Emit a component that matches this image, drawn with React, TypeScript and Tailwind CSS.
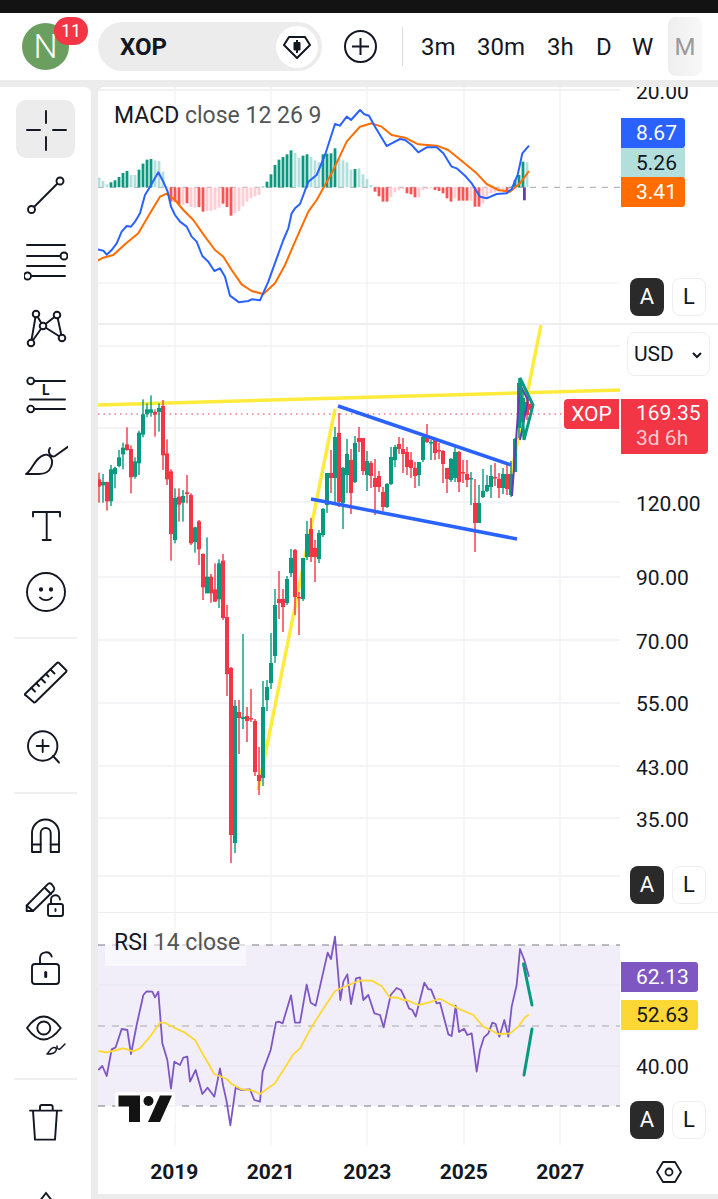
import React from 'react';

type Pt = [number, number];
type Candle = [number, number, number, number, number, string];

// traced points are in 3x crop coordinates, z() brings them back to page pixels
const z = (pts: Pt[], ox: number, oy: number) => pts.map(([x, y]) => `${ox + x / 3},${oy + y / 3}`).join(' ');

const GREEN = '#089981';
const RED = '#f23645';

const macdBlue: Pt[] = [[8,493],[25,497],[35,509],[50,495],[65,475],[80,440],[95,423],[108,425],[120,410],[135,385],[150,330],[165,305],[190,262],[205,290],[218,320],[228,365],[240,390],[255,410],[275,425],[290,455],[305,470],[322,513],[340,530],[358,558],[375,550],[390,575],[405,632],[432,652],[460,648],[470,643],[495,646],[520,590],[545,520],[565,465],[580,430],[590,385],[600,370],[615,357],[640,290],[665,270],[690,210],[720,117],[735,122],[755,95],[768,105],[795,75],[808,88],[822,92],[840,125],[855,150],[875,183],[890,175],[915,162],[930,165]];
const macdBlue2: Pt[] = [[0,165],[20,180],[40,202],[65,187],[95,187],[115,205],[140,245],[155,250],[180,272],[200,295],[225,335],[245,340],[275,327],[305,325],[320,312],[338,270],[352,205],[372,182]];
const macdOrange: Pt[] = [[8,527],[25,518],[55,510],[90,478],[130,445],[165,385],[195,335],[215,326],[240,345],[265,375],[295,405],[330,455],[360,495],[385,515],[410,555],[440,598],[470,618],[505,627],[540,595],[570,540],[600,470],[640,380],[665,345],[710,265],[755,170],[795,125],[830,115],[860,125],[890,150],[930,158]];
const macdOrange2: Pt[] = [[0,158],[40,178],[95,182],[130,195],[175,232],[215,265],[245,297],[280,315],[315,320],[345,295],[372,258]];

const histColor: Record<string, string> = { g: '#089981', l: '#b2dfdb', r: '#ff5252', p: '#ffcdd2' };
const hist: [number, string][] = [[278,'l'],[288,'l'],[298,'l'],[292,'g'],[286,'g'],[276,'g'],[264,'g'],[258,'g'],[270,'l'],[270,'l'],[254,'g'],[236,'g'],[224,'g'],[222,'g'],[226,'l'],[228,'l'],[260,'l'],[304,'l'],[350,'r'],[350,'r'],[358,'r'],[360,'p'],[355,'r'],[366,'p'],[368,'p'],[366,'r'],[380,'r'],[378,'p'],[378,'p'],[374,'p'],[368,'p'],[356,'r'],[366,'r'],[392,'r'],[384,'p'],[378,'p'],[364,'p'],[350,'p'],[340,'p'],[334,'p'],[330,'p'],[305,'g'],[290,'g'],[268,'g'],[240,'g'],[224,'g'],[216,'g'],[208,'g'],[196,'g'],[204,'l'],[218,'l'],[212,'g'],[208,'g'],[216,'l'],[226,'l'],[232,'l'],[208,'g'],[206,'g'],[205,'g'],[190,'g'],[220,'l'],[226,'l'],[232,'l'],[254,'l'],[252,'g'],[250,'l'],[268,'l'],[282,'l'],[300,'l'],[320,'r'],[334,'r'],[350,'r'],[350,'r'],[336,'p'],[322,'p'],[316,'p'],[312,'p'],[325,'r'],[328,'r'],[337,'r'],[337,'p'],[315,'p'],[312,'p'],[310,'p'],[315,'r'],[318,'r'],[325,'r'],[340,'r'],[350,'r'],[340,'p'],[347,'r'],[347,'r'],[347,'r'],[347,'p'],[365,'r'],[365,'r'],[355,'p'],[340,'p'],[325,'p'],[322,'p'],[320,'p'],[320,'p'],[325,'r'],[305,'g'],[285,'g'],[270,'g'],[230,'g'],[232,'l']];

// first stretch: y in crop coordinates of the crop at y=380
const c1: Candle[] = ([[278,368,298,320,'r'],[282,368,306,316,'g'],[305,392,306,364,'r'],[255,378,268,364,'g'],[260,325,264,282,'g'],[210,262,232,258,'g'],[188,268,203,223,'g'],[142,212,193,210,'r'],[196,340,207,292,'r'],[232,296,244,290,'g'],[152,285,158,250,'g'],[58,172,103,164,'g'],[70,112,88,102,'g'],[46,110,88,98,'g'],[88,170,96,104,'r'],[70,155,84,96,'g'],[60,270,78,226,'r'],[178,315,220,298,'r'],[268,542,274,462,'r'],[325,490,354,480,'g'],[325,425,350,374,'r'],[330,425,348,368,'g'],[285,370,337,342,'r'],[340,495,345,490,'r'],[440,518,442,486,'g'],[420,555,424,508,'r'],[520,660,522,622,'r'],[472,640,590,640,'g'],[582,668,590,640,'r'],[550,665,628,665,'r'],[538,684,550,658,'g'],[522,720,542,714,'r']] as [number, number, number, number, string][]).map(([h, l, t, b, c], i) => [99 + 4 * i, 380 + h / 3, 380 + l / 3, 380 + t / 3, 380 + b / 3, c]);

// rest: page y values
const c2: [number, number, number, number, string][] = [[605,696,617,674,'r'],[667,863,668,835,'r'],[700,853,706,843,'g'],[700,754,712,718,'r'],[634,729,717,719,'g'],[707,742,716,721,'r'],[689,722,718,719,'r'],[719,776,721,772,'r'],[747,795,775,781,'r'],[681,786,707,778,'g'],[680,711,687,700,'g'],[633,689,663,683,'g'],[589,663,605,656,'g'],[571,619,599,603,'r'],[589,632,599,607,'r'],[576,605,579,603,'g'],[549,577,558,573,'g'],[549,615,550,597,'r'],[592,635,597,598,'r'],[558,601,558,599,'g'],[521,560,534,557,'g'],[518,562,529,557,'r'],[540,582,548,557,'r'],[530,563,533,559,'g'],[508,537,509,535,'g'],[473,513,473,505,'g'],[450,493,473,478,'r'],[427,503,437,478,'g'],[413,507,433,502,'r'],[467,529,468,503,'g'],[439,493,454,475,'g'],[449,514,460,493,'r'],[436,483,443,482,'g'],[427,452,438,442,'r'],[438,475,438,471,'r'],[451,491,461,475,'g'],[461,488,463,476,'r'],[459,515,478,487,'r'],[471,492,476,487,'r'],[487,511,492,507,'r'],[483,508,484,507,'g'],[447,485,457,484,'g'],[445,467,447,460,'g'],[437,454,444,449,'r'],[438,473,449,454,'r'],[447,475,452,467,'r'],[452,478,460,468,'r'],[462,488,468,476,'r'],[462,486,462,475,'g'],[435,462,437,460,'g'],[424,443,437,442,'r'],[440,460,442,443,'g'],[438,460,440,453,'r'],[443,459,450,451,'r'],[450,483,451,464,'r'],[468,493,468,479,'r'],[458,482,459,480,'g'],[447,482,452,478,'g'],[451,492,452,482,'r'],[460,483,472,473,'r'],[460,487,474,480,'r'],[472,505,478,479,'g'],[479,552,503,523,'r'],[485,523,503,523,'g'],[469,498,491,497,'g'],[475,492,485,491,'g'],[465,498,476,487,'g'],[463,486,477,478,'r'],[473,498,479,488,'r'],[468,494,474,488,'g'],[463,495,474,489,'r'],[461,497,474,495,'g'],[438,472,439,472,'g'],[378,438,383,428,'g'],[390,431,398,422,'g'],[395,420,402,415,'r'],[400,412,404,410,'r']];
const candles: Candle[] = [...c1, ...c2.map(([h, l, t, b, c], i) => [99 + 4 * (32 + i), h, l, t, b, c] as Candle)];

const rsiPurple: Pt[] = [[10,480],[22,468],[35,498],[50,418],[62,412],[80,357],[97,360],[108,432],[125,345],[145,255],[155,244],[172,245],[180,262],[190,245],[202,400],[217,450],[228,536],[238,455],[255,465],[265,443],[277,440],[285,515],[302,480],[322,552],[338,533],[358,560],[375,475],[385,530],[395,575],[406,646],[422,533],[438,540],[465,538],[478,570],[495,575],[503,485],[527,420],[543,337],[552,335],[563,340],[588,256],[600,338],[615,338],[635,224],[647,278],[662,287],[698,128],[708,147],[720,80],[736,270],[745,215],[757,193],[768,282],[783,205],[795,202],[805,270],[820,255],[838,310],[855,315],[866,352],[887,255],[905,234],[918,240],[930,265]];
const rsiPurple2: Pt[] = [[0,265],[12,295],[22,300],[32,320],[58,218],[70,238],[78,238],[95,280],[105,278],[130,373],[140,378],[152,287],[162,366],[177,356],[187,375],[200,370],[215,485],[225,420],[237,382],[250,370],[262,338],[272,342],[283,380],[298,330],[310,380],[320,290],[335,225],[345,117],[358,150],[372,200]];
const rsiYellow: Pt[] = [[10,423],[35,427],[65,420],[85,415],[115,424],[135,415],[165,380],[195,338],[210,338],[235,352],[270,368],[300,390],[325,435],[358,492],[395,507],[410,522],[440,538],[470,541],[495,552],[540,520],[565,480],[595,433],[615,415],[650,350],[720,243],[760,225],[795,212],[830,212],[860,228],[885,263],[905,262],[930,272]];
const rsiYellow2: Pt[] = [[0,268],[40,285],[70,278],[105,266],[130,280],[165,298],[205,315],[235,350],[280,372],[315,370],[340,350],[360,322],[372,314]];

const vGrid = [175, 271, 367, 464, 560];

const VLines = ({ y1, y2 }: { y1: number; y2: number }) => (
  <>
    {vGrid.map((x) => (
      <line key={x} x1={x} x2={x} y1={y1} y2={y2} stroke="#f0f0f2" strokeWidth={1.2} />
    ))}
  </>
);

const MacdChart = () => (
  <svg className="block w-full h-full" viewBox="98 87 522 236">
    <VLines y1={87} y2={323} />
    <line x1={98} x2={620} y1={90} y2={90} stroke="#f2f2f2" strokeWidth={2} />
    <line x1={98} x2={620} y1={283} y2={283} stroke="#f0f0f2" strokeWidth={1.2} />
    <line x1={98} x2={620} y1={187.3} y2={187.3} stroke="#a5a7ae" strokeWidth={1} strokeDasharray="6 6" />
    {hist.map(([v, c], i) => {
      const y = 85 + v / 3;
      return <rect key={i} x={97.6 + 4 * i} width={2.8} y={Math.min(y, 187.3)} height={Math.abs(y - 187.3)} fill={histColor[c]} />;
    })}
    <rect x={523} y={187.3} width={2.8} height={13} fill="#673ab7" />
    <polyline points={z(macdOrange, 95, 85) + ' ' + z(macdOrange2, 405, 85)} fill="none" stroke="#ff6d00" strokeWidth={2} strokeLinejoin="round" />
    <polyline points={z(macdBlue, 95, 85) + ' ' + z(macdBlue2, 405, 85)} fill="none" stroke="#2962ff" strokeWidth={2} strokeLinejoin="round" />
  </svg>
);

const MainChart = () => (
  <svg className="block w-full h-full" viewBox="98 325 522 587">
    <VLines y1={325} y2={912} />
    {[346, 428, 502, 577, 640, 703, 766, 818, 876].map((y) => (
      <line key={y} x1={98} x2={620} y1={y} y2={y} stroke="#f1f1f3" strokeWidth={1.5} />
    ))}
    <line x1={98} x2={563} y1={414} y2={414} stroke={RED} strokeWidth={1.2} strokeDasharray="1.5 4" />
    <line x1={98} y1={405} x2={620} y2={390} stroke="#ffeb3b" strokeWidth={3.5} />
    <line x1={258} y1={790} x2={335} y2={409} stroke="#ffeb3b" strokeWidth={3.5} />
    <line x1={510} y1={480} x2={541} y2={325} stroke="#ffeb3b" strokeWidth={3.5} />
    {candles.map(([x, h, l, t, b, c], i) => (
      <g key={i} fill={c === 'g' ? GREEN : RED}>
        <rect x={x - 0.7} width={1.4} y={h} height={l - h} />
        <rect x={x - 2} width={4} y={t} height={Math.max(b - t, 1.5)} />
      </g>
    ))}
    <line x1={338} y1={406} x2={511} y2={465} stroke="#2962ff" strokeWidth={3.5} />
    <line x1={311} y1={499} x2={517} y2={539} stroke="#2962ff" strokeWidth={3.5} />
    <polyline points="512,496 520,385 528,400 520,440" fill="none" stroke="#673ab7" strokeWidth={2} />
    <polygon points="520,378 533,405 524,440" fill="none" stroke={GREEN} strokeWidth={3} />
  </svg>
);

const RsiChart = () => (
  <svg className="block w-full h-full" viewBox="98 913 522 232">
    <rect x={98} y={945} width={522} height={161} fill="#f1eef9" />
    <VLines y1={913} y2={1145} />
    {[985, 1066].map((y) => (
      <line key={y} x1={98} x2={620} y1={y} y2={y} stroke="#e8e6ef" strokeWidth={1.2} />
    ))}
    <line x1={98} x2={620} y1={945} y2={945} stroke="#787b86" strokeWidth={1.2} strokeDasharray="7 7" />
    <line x1={98} x2={620} y1={1026} y2={1026} stroke="#a5a7ae" strokeWidth={1.2} strokeDasharray="7 7" />
    <line x1={98} x2={620} y1={1106} y2={1106} stroke="#787b86" strokeWidth={1.2} strokeDasharray="7 7" />
    <polyline points={z(rsiPurple, 95, 910) + ' ' + z(rsiPurple2, 405, 910)} fill="none" stroke="#7e57c2" strokeWidth={1.8} strokeLinejoin="round" />
    <polyline points={z(rsiYellow, 95, 910) + ' ' + z(rsiYellow2, 405, 910)} fill="none" stroke="#fdd835" strokeWidth={1.8} strokeLinejoin="round" />
    <line x1={523.5} y1={964} x2={532} y2={1005} stroke={GREEN} strokeWidth={3} strokeLinecap="round" />
    <line x1={532} y1={1029} x2={524} y2={1075} stroke={GREEN} strokeWidth={3} strokeLinecap="round" />
    <g transform="translate(95 910)">
      <rect x={20} y={182} width={60} height={32} fill="#ffffff" opacity={0.85} />
      <path d="M23.5 185.5H45V212H34V196.5H23.5Z" fill="#131313" />
      <circle cx={53.5} cy={191} r={5} fill="#131313" />
      <path d="M65 185.5H77L65 212H53Z" fill="#131313" />
    </g>
  </svg>
);

const Icon = ({ children }: { children: React.ReactNode }) => (
  <svg className="w-11 h-11" viewBox="0 0 44 44" fill="none" stroke="#131722" strokeWidth={1.9} strokeLinecap="round" strokeLinejoin="round">
    {children}
  </svg>
);

const tools: React.ReactNode[] = [
  <path d="M22 3V15M22 29V42M3 22H16M29 22H42" />,
  <><path d="M10 33L33 10" /><circle cx={7.5} cy={35.5} r={3.5} fill="#fff" /><circle cx={36} cy={7} r={3.5} fill="#fff" /></>,
  <><path d="M3 5H41M3 16H36.5M3 26H41M7 36H41" /><circle cx={40} cy={16} r={3.5} /><circle cx={3.5} cy={36} r={3.5} /></>,
  <><path d="M12 8L7 37L19 20ZM19 20L38 32L33 9Z" /><circle cx={12} cy={8} r={3.3} fill="#fff" /><circle cx={33} cy={9} r={3.3} fill="#fff" /><circle cx={19} cy={20} r={3.3} fill="#fff" /><circle cx={7} cy={37} r={3.3} fill="#fff" /><circle cx={38} cy={32} r={3.3} fill="#fff" /></>,
  <><path d="M10 9H41M6 27.5H41M10 37H41" /><circle cx={6.7} cy={9} r={3.4} /><circle cx={6.7} cy={37} r={3.4} /><text x={18} y={23} fontSize={14} fontWeight={700} fontFamily="Roboto, sans-serif" fill="#131722" stroke="none">L</text></>,
  <><path d="M2 36C9 32 10 20 20 17C26 15 30 22 27 29C25 34 20 36 15 36Z" /><path d="M26 10C23 14 27 20 31 18L45 8" /></>,
  <path d="M9 12.5V8H36V12.5M22.7 8V36M18.7 36H26.7" />,
  <><circle cx={22} cy={22} r={19} /><circle cx={17} cy={19.5} r={1.2} fill="#131722" /><circle cx={27} cy={19.5} r={1.2} fill="#131722" /><path d="M16 27.5C19 31 25 31 28 27.5" /></>,
];

const tools2: React.ReactNode[] = [
  <><path d="M1 34L33 3Q34 2 35 3L42 10Q43 11 42 12L11.5 42Q10.5 43 9.5 42L2 35.5Q0.5 35 1 34Z" /><path d="M7.5 28L11 31.5M12.5 23.5L15 26M17 18.5L21 22.5M22 14L24.5 16.5M26.5 9.5L30.5 13.5" /></>,
  <><circle cx={18.7} cy={21} r={14.7} /><path d="M18.7 15V27M12.7 21H24.7M29 31L35 37.5" /></>,
];

const tools3: React.ReactNode[] = [
  <><path d="M8 38V19A13.5 13.5 0 0 1 35 19V38H26.7V19A5 5 0 0 0 16.7 19V38Z" /><path d="M8 30.5H16.7M26.7 30.5H35" /></>,
  <><path d="M2.7 25.5L24.3 3.7Q26 2.5 27.5 4L30 7.5Q31 9.5 29.5 11L9 31H2.7Z" /><path d="M2.7 25.5L9 31M21 8L27 14" /><rect x={24} y={24} width={15} height={12} rx={2} /><path d="M27 24V20A4.5 4.5 0 0 1 36 19.5" /><path d="M31.5 29V31" /></>,
  <><rect x={8} y={18} width={27} height={20} rx={3} /><path d="M16 18V12A6 6 0 0 1 27.7 10.5" /><path d="M21.7 26.5V30.5" strokeWidth={3} /></>,
  <><path d="M3 16Q19.5 -7 36.7 16Q19.5 39 3 16Z" /><circle cx={19.8} cy={16} r={6.5} /><path d="M23 42C25 41 26 36 29.5 35.5C33 35 33 38 31 40C29.5 42 26 42 23 42Z" strokeWidth={1.5} /><path d="M33 34C32.5 37 35 38 36.5 36.5L41 32" strokeWidth={1.5} /></>,
];

const ToolCell = ({ h, children }: { h: string; children: React.ReactNode }) => (
  <div className={`${h} flex items-center justify-center shrink-0`}>{children}</div>
);

const Divider = ({ className }: { className: string }) => <div className={`h-[2px] mx-[14px] bg-[#f0f0f0] shrink-0 ${className}`} />;

const Sidebar = () => (
  <div className="w-[91px] shrink-0 bg-white rounded-tr-[6px] overflow-hidden flex flex-col pt-[10px]">
    <div className="h-[66px] relative flex items-center justify-center shrink-0">
      <div className="absolute left-[16px] top-[3px] w-[59px] h-[58px] rounded-[10px] bg-[#ececec]" />
      <div className="relative">
        <Icon>{tools[0]}</Icon>
      </div>
    </div>
    {tools.slice(1).map((t, i) => (
      <ToolCell key={i} h="h-[66px]"><Icon>{t}</Icon></ToolCell>
    ))}
    <Divider className="mt-[12px]" />
    <div className="mt-[10px]" />
    {tools2.map((t, i) => (
      <ToolCell key={i} h="h-[65px]"><Icon>{t}</Icon></ToolCell>
    ))}
    <Divider className="mt-[13px]" />
    <div className="mt-[9px]" />
    {tools3.map((t, i) => (
      <ToolCell key={i} h="h-[66px]"><Icon>{t}</Icon></ToolCell>
    ))}
    <Divider className="mt-[11px]" />
    <div className="mt-[9px]" />
    <ToolCell h="h-[66px]">
      <Icon>
        <path d="M6 10.6H37.7M9 10.6L11 39.6H31L33 10.6M16 10.6V7Q16 5 18 5H26.7Q28.7 5 28.7 7V10.6" />
      </Icon>
    </ToolCell>
    <div className="flex justify-center pt-[35px]">
      <svg className="w-6 h-3" viewBox="0 0 24 12" fill="none" stroke="#131722" strokeWidth={1.9}><path d="M5 12L12 3L19 12" /></svg>
    </div>
  </div>
);

const AL = ({ top }: { top: string }) => (
  <div className={`absolute left-[10px] ${top} flex gap-2 text-[22px] leading-none`}>
    <div className="w-[34px] h-[38px] rounded-lg bg-[#2a2a2a] text-white flex items-center justify-center">A</div>
    <div className="w-[34px] h-[38px] rounded-lg bg-white border border-[#eeeeee] text-[#131722] flex items-center justify-center">L</div>
  </div>
);

const Price = ({ top, children }: { top: string; children: React.ReactNode }) => (
  <div className={`absolute left-[16px] ${top} h-6 leading-6 text-[21px] text-[#131722]`}>{children}</div>
);

const Tag = ({ className, children }: { className: string; children: React.ReactNode }) => (
  <div className={`absolute left-[1px] h-[30px] pl-[15px] leading-[31px] text-[21px] ${className}`}>{children}</div>
);

const Header = () => (
  <div className="h-[67px] shrink-0 bg-white flex items-center relative">
    <div className="ml-[22px] w-[47px] h-[47px] rounded-full bg-[#6a9f60] text-white text-[34px] leading-[47px] text-center font-light">N</div>
    <div className="absolute left-[54px] top-[4px] w-[34px] h-[28px] rounded-[14px] bg-[#f23645] text-white text-[18px] leading-[28px] text-center">11</div>
    <div className="ml-[29px] w-[224px] h-[49px] rounded-full bg-[#ececec] flex items-center justify-between pl-[22px] pr-[4px]">
      <span className="text-[24px] font-bold text-[#131722]">XOP</span>
      <div className="w-[42px] h-[42px] rounded-full bg-white flex items-center justify-center">
        <svg className="w-7 h-6" viewBox="0 0 28 24" fill="none" stroke="#131722" strokeWidth={2} strokeLinejoin="round">
          <path d="M6 2H22L27 10L14 23L1 10Z" />
          <path d="M14 5V18" />
          <rect x={11.5} y={8} width={5} height={6.5} fill="#131722" />
        </svg>
      </div>
    </div>
    <svg className="ml-[22px] w-[33px] h-[33px]" viewBox="0 0 33 33" fill="none" stroke="#131722" strokeWidth={2}>
      <circle cx={16.5} cy={16.5} r={15.5} />
      <path d="M16.5 8V25M8 16.5H25" />
    </svg>
    <div className="ml-[25px] w-[1px] h-[39px] bg-[#dddddd]" />
    <div className="ml-[18px] flex items-center text-[24px] text-[#131722]">
      <span className="w-[35px]">3m</span>
      <span className="ml-[21px] w-[48px]">30m</span>
      <span className="ml-[22px] w-[26px]">3h</span>
      <span className="ml-[23px] w-[15px]">D</span>
      <span className="ml-[21px] w-[23px]">W</span>
    </div>
    <div className="ml-[13px] w-[34px] h-[59px] rounded-lg bg-gradient-to-r from-[#eeeeee] to-[#f8f8f8] text-[24px] text-[#9a9a9a] flex items-center justify-center">M</div>
  </div>
);

export default function App() {
  return (
    <div className="w-[718px] h-[1199px] overflow-hidden bg-[#ececec] flex flex-col [font-family:Roboto,sans-serif]">
      <div className="h-[13px] shrink-0 bg-[#131313]" />
      <Header />
      <div className="flex-1 mt-[7px] flex min-h-0 gap-[7px]">
        <Sidebar />
        <div className="flex-1 flex flex-col bg-white rounded-tl-[6px] overflow-hidden mb-[5px]">
          {/* MACD */}
          <div className="h-[236px] shrink-0 flex overflow-hidden">
            <div className="w-[522px] relative">
              <MacdChart />
              <div className="absolute left-[16px] top-[15px] text-[23px] leading-7 text-[#555555]">
                <span className="text-[#131722]">MACD</span> close 12 26 9
              </div>
            </div>
            <div className="flex-1 relative">
              <Price top="top-[-7px]">20.00</Price>
              <Price top="top-[90px]">0.00</Price>
              <Tag className="top-[31px] w-[64px] bg-[#2962ff] text-white rounded-r-[3px]">8.67</Tag>
              <Tag className="top-[61px] w-[64px] bg-[#b2dfdb] text-[#131722]">5.26</Tag>
              <Tag className="top-[90px] w-[64px] bg-[#ff6d00] text-white rounded-r-[3px]">3.41</Tag>
              <AL top="top-[191px]" />
            </div>
          </div>
          <div className="h-[2px] shrink-0 bg-[#eeeeee]" />
          {/* price */}
          <div className="h-[587px] shrink-0 flex overflow-hidden">
            <div className="w-[522px] relative">
              <MainChart />
              <div className="absolute left-[466px] top-[74px] w-[55px] h-[30px] rounded-l-[4px] bg-[#f23645] text-white text-[21px] leading-[31px] text-center">XOP</div>
            </div>
            <div className="flex-1 relative">
              <div className="absolute left-[7px] top-[7px] w-[83px] h-[44px] rounded-lg border border-[#eeeeee] bg-white flex items-center justify-between pl-[6px] pr-[6px] pt-px text-[21px] text-[#131722]">
                USD
                <svg className="w-3 h-3" viewBox="0 0 12 12" fill="none" stroke="#131722" strokeWidth={2}><path d="M2 4L6 8L10 4" /></svg>
              </div>
              <div className="absolute left-[1px] top-[74px] w-[87px] h-[55px] rounded-r-[4px] bg-[#f23645] pl-[15px] text-[21px] leading-[25px] pt-[2px] text-white">
                169.35
                <div className="text-[#ffc9ce]">3d 6h</div>
              </div>
              <Price top="top-[167px]">120.00</Price>
              <Price top="top-[241px]">90.00</Price>
              <Price top="top-[305px]">70.00</Price>
              <Price top="top-[367px]">55.00</Price>
              <Price top="top-[431px]">43.00</Price>
              <Price top="top-[483px]">35.00</Price>
              <AL top="top-[541px]" />
            </div>
          </div>
          <div className="h-px shrink-0 bg-[#eeeeee]" />
          {/* RSI */}
          <div className="h-[232px] shrink-0 flex overflow-hidden">
            <div className="w-[522px] relative">
              <RsiChart />
              <div className="absolute left-[7px] top-[16px] w-[141px] h-[37px] bg-white/50 pl-[9px] text-[23px] leading-7 text-[#555555]">
                <span className="text-[#131722]">RSI</span> 14 close
              </div>
            </div>
            <div className="flex-1 relative">
              <Price top="top-[60px]">60.00</Price>
              <Tag className="top-[49px] w-[77px] bg-[#7e57c2] text-white rounded-r-[3px]">62.13</Tag>
              <Tag className="top-[87px] w-[77px] bg-[#fdd835] text-[#131722] rounded-r-[3px]">52.63</Tag>
              <Price top="top-[142px]">40.00</Price>
              <AL top="top-[188px]" />
            </div>
          </div>
          {/* time axis */}
          <div className="flex-1 flex items-center">
            <div className="w-[522px] pl-[28px] pt-[6px] flex text-[21px] font-bold text-[#131722]">
              {['2019', '2021', '2023', '2025', '2027'].map((y) => (
                <span key={y} className="w-[96.5px] text-center">{y}</span>
              ))}
            </div>
            <svg className="ml-[36px] mt-[4px] w-[26px] h-[24px]" viewBox="0 0 26 24" fill="none" stroke="#131722" strokeWidth={1.8} strokeLinejoin="round">
              <path d="M7 2H19L25 12L19 22H7L1 12Z" />
              <circle cx={13} cy={12} r={3.5} />
            </svg>
          </div>
        </div>
      </div>
    </div>
  );
}
